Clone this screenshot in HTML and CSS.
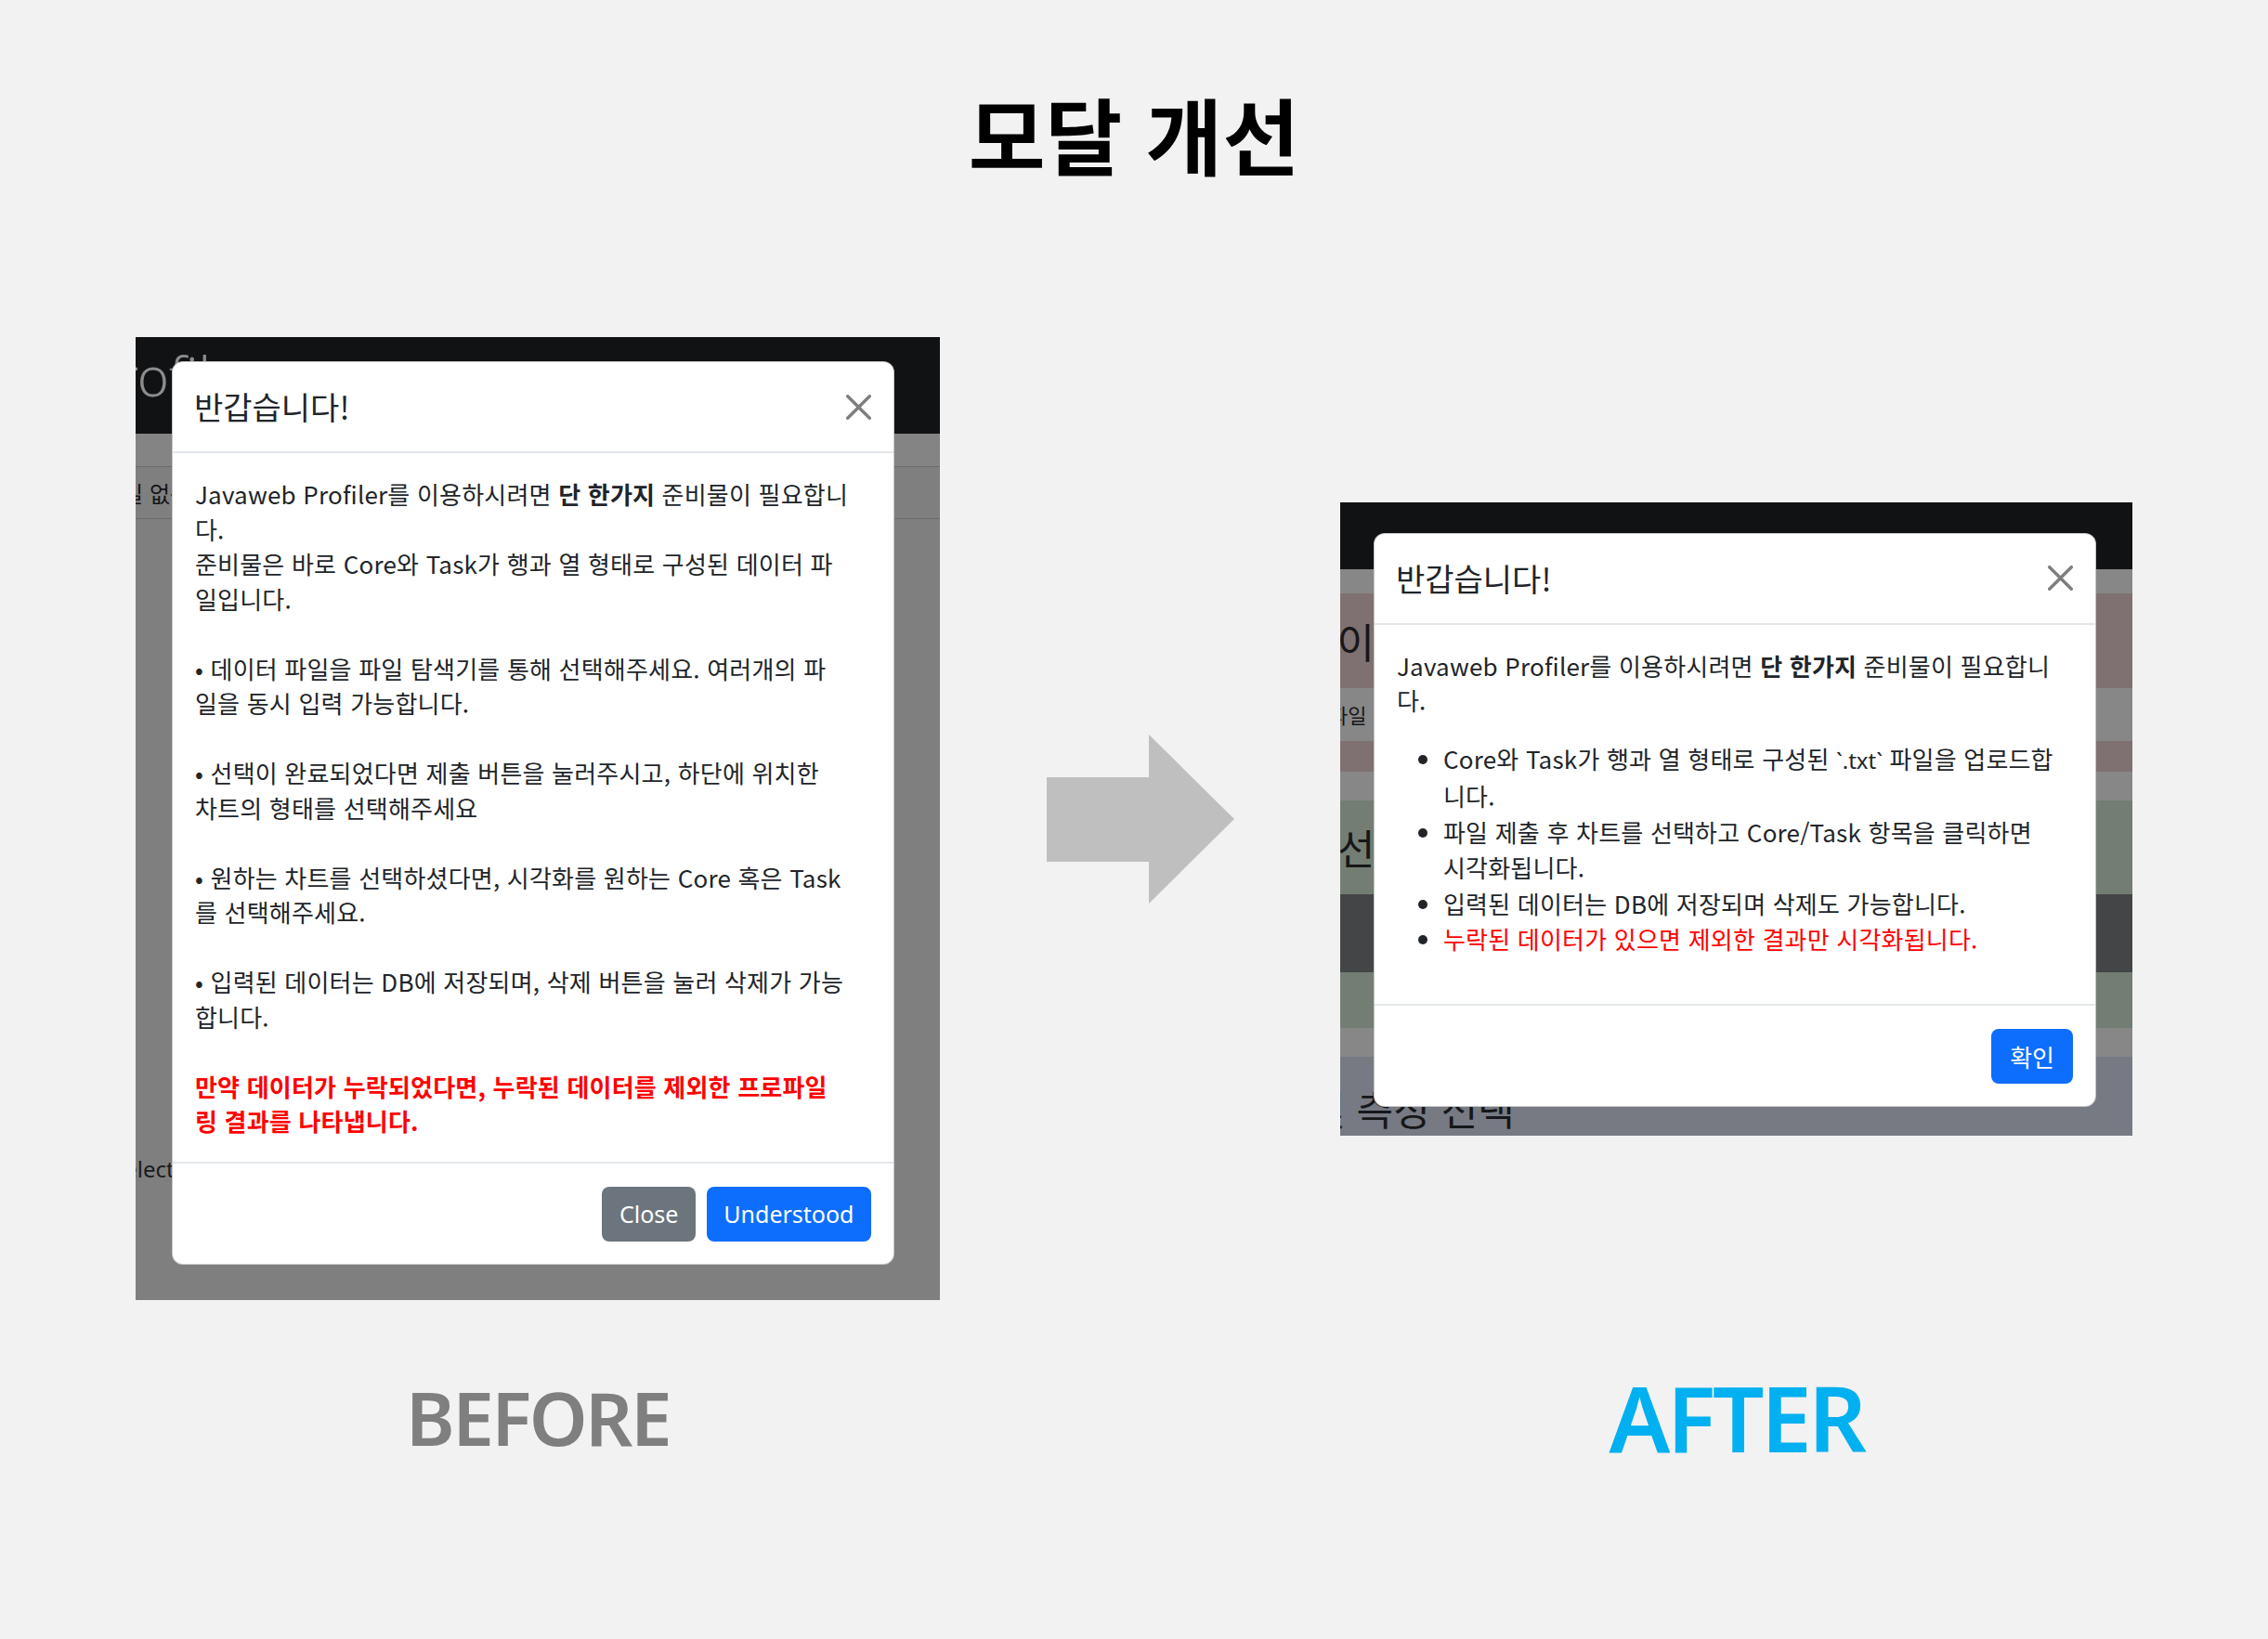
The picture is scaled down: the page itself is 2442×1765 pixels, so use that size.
FILE: index.html
```html
<!DOCTYPE html>
<html lang="ko">
<head>
<meta charset="utf-8">
<title>모달 개선</title>
<link rel="stylesheet" href="styles.css">
</head>
<body>
<main class="slide">
  <h1 class="slide-title">모달 개선</h1>
  <div class="compare">
    <section class="shot shot-before">
      <div class="bg-nav"><span class="bg-brand">Profiler</span></div>
      <div class="bg-band"></div>
      <div class="bg-row"><span class="bg-row-text">파일 없음</span></div>
      <div class="bg-select">Select</div>

      <div class="modal modal-before">
        <div class="modal-header">
          <h2 class="modal-title">반갑습니다!</h2>
          <svg class="btn-close" viewBox="0 0 16 16" aria-label="닫기"><path d="M.293.293a1 1 0 0 1 1.414 0L8 6.586 14.293.293a1 1 0 1 1 1.414 1.414L9.414 8l6.293 6.293a1 1 0 0 1-1.414 1.414L8 9.414l-6.293 6.293a1 1 0 0 1-1.414-1.414L6.586 8 .293 1.707a1 1 0 0 1 0-1.414z"/></svg>
        </div>
        <div class="modal-body body-before">
          Javaweb Profiler를 이용하시려면 <b>단 한가지</b> 준비물이 필요합니<br>다.<br>
          준비물은 바로 Core와 Task가 행과 열 형태로 구성된 데이터 파<br>일입니다.<br>
          <br>
          • 데이터 파일을 파일 탐색기를 통해 선택해주세요. 여러개의 파<br>일을 동시 입력 가능합니다.<br>
          <br>
          • 선택이 완료되었다면 제출 버튼을 눌러주시고, 하단에 위치한<br>차트의 형태를 선택해주세요<br>
          <br>
          • 원하는 차트를 선택하셨다면, 시각화를 원하는 Core 혹은 Task<br>를 선택해주세요.<br>
          <br>
          • 입력된 데이터는 DB에 저장되며, 삭제 버튼을 눌러 삭제가 가능<br>합니다.<br>
          <br>
          <b class="warn">만약 데이터가 누락되었다면, 누락된 데이터를 제외한 프로파일<br>링 결과를 나타냅니다.</b>
        </div>
        <div class="modal-footer">
          <button class="btn btn-secondary" type="button">Close</button>
          <button class="btn btn-primary" type="button">Understood</button>
        </div>
      </div>
    </section>

    <div class="arrow">
      <svg viewBox="0 0 202 182" width="202" height="182"><polygon points="0,46 110,46 110,0 202,91 110,182 110,137 0,137"/></svg>
    </div>

    <section class="shot shot-after">
      <div class="band b-dark"></div>
      <div class="band b-gray h26"></div>
      <div class="band b-pink h102"><span class="bg-big shift-44">데이</span></div>
      <div class="band b-gray h57"><span class="bg-small">파일</span></div>
      <div class="band b-pink h33"></div>
      <div class="band b-gray h31"></div>
      <div class="band b-green h101"><span class="bg-big shift-4">선택</span></div>
      <div class="band b-darkgray h84"></div>
      <div class="band b-green h60"></div>
      <div class="band b-gray h31"></div>
      <div class="band b-blue h85"><span class="bg-bottom">및 측정 선택</span></div>

      <div class="modal modal-after">
        <div class="modal-header">
          <h2 class="modal-title">반갑습니다!</h2>
          <svg class="btn-close" viewBox="0 0 16 16" aria-label="닫기"><path d="M.293.293a1 1 0 0 1 1.414 0L8 6.586 14.293.293a1 1 0 1 1 1.414 1.414L9.414 8l6.293 6.293a1 1 0 0 1-1.414 1.414L8 9.414l-6.293 6.293a1 1 0 0 1-1.414-1.414L6.586 8 .293 1.707a1 1 0 0 1 0-1.414z"/></svg>
        </div>
        <div class="modal-body body-after">
          <p class="intro">Javaweb Profiler를 이용하시려면 <b>단 한가지</b> 준비물이 필요합니<br>다.</p>
          <ul class="guide">
            <li>Core와 Task가 행과 열 형태로 구성된 <span class="tick">`.txt`</span> 파일을 업로드합<br>니다.</li>
            <li>파일 제출 후 차트를 선택하고 Core/Task 항목을 클릭하면<br>시각화됩니다.</li>
            <li>입력된 데이터는 DB에 저장되며 삭제도 가능합니다.</li>
            <li><span class="red">누락된 데이터가 있으면 제외한 결과만 시각화됩니다.</span></li>
          </ul>
        </div>
        <div class="modal-footer">
          <button class="btn btn-primary btn-ko" type="button">확인</button>
        </div>
      </div>
    </section>

    <div class="label label-before">BEFORE</div>
    <div class="label-spacer"></div>
    <div class="label label-after">AFTER</div>
  </div>
</main>
</body>
</html>
```

FILE: styles.css
```css
* { box-sizing: border-box; }

html, body {
  margin: 0;
  padding: 0;
}

body {
  width: 2442px;
  height: 1765px;
  overflow: hidden;
  background: #f2f2f2;
  font-family: "Noto Sans CJK KR", "Noto Sans", sans-serif;
  color: #212529;
}

.slide {
  padding-top: 90px;
}

.slide-title {
  margin: 0;
  text-align: center;
  font-family: "Noto Sans CJK KR", sans-serif;
  font-weight: 700;
  font-size: 90px;
  line-height: 106px;
  color: #000;
}

.compare {
  display: grid;
  grid-template-columns: 866px 431px 853px;
  align-items: center;
  margin-top: 167px;
  padding-left: 146px;
}

/* ---------- screenshots ---------- */
.shot {
  position: relative;
  overflow: hidden;
}

.shot-before {
  width: 866px;
  height: 1037px;
  background: #7f7f7f;
}

.shot-after {
  width: 853px;
  height: 682px;
  background: #878787;
}

.bg-nav {
  height: 104px;
  background: #111214;
  display: flex;
  align-items: center;
  padding-bottom: 22px;
}

.bg-brand {
  margin-left: -54px;
  font-family: "Noto Sans", sans-serif;
  font-weight: 300;
  font-size: 58px;
  color: #8c8c8c;
  white-space: nowrap;
}

.bg-band {
  height: 36px;
  background: #848484;
  border-bottom: 1px solid #6c6c6c;
}

.bg-row {
  height: 56px;
  border-bottom: 1px solid #6c6c6c;
  display: flex;
  align-items: center;
}

.bg-row-text {
  margin-left: -36px;
  font-size: 24px;
  color: #141516;
  white-space: nowrap;
}

.bg-select {
  margin-top: 682px;
  margin-left: -25px;
  font-family: "Noto Sans", sans-serif;
  font-size: 24px;
  line-height: 36px;
  color: #1a1b1c;
  white-space: nowrap;
}

.band {
  display: flex;
  align-items: center;
  overflow: hidden;
  white-space: nowrap;
  color: #161718;
}

.b-dark { height: 72px; background: #111214; }
.b-gray { background: #878787; }
.b-pink { background: #7f7171; }
.b-green { background: #737d73; }
.b-darkgray { background: #444546; }
.b-blue { background: #777a83; align-items: flex-end; }

.h26 { height: 26px; }
.h31 { height: 31px; }
.h33 { height: 33px; }
.h57 { height: 57px; }
.h60 { height: 60px; }
.h84 { height: 84px; }
.h85 { height: 85px; }
.h101 { height: 101px; }
.h102 { height: 102px; }

.bg-big {
  font-size: 44px;
  line-height: 1;
}

.shift-44 { margin-left: -44px; }
.shift-4 { margin-left: -3px; }

.bg-small {
  margin-left: -12px;
  font-size: 22px;
  line-height: 1;
}

.bg-bottom {
  margin-left: -34px;
  margin-bottom: 3px;
  font-size: 43px;
  line-height: 1.2;
}

/* ---------- modal ---------- */
.modal {
  position: absolute;
  width: 778px;
  background: #fff;
  border: 1px solid rgba(0, 0, 0, 0.22);
  border-radius: 12px;
  font-family: "Noto Sans CJK KR", sans-serif;
  color: #212529;
}

.modal-before { left: 39px; top: 26px; }
.modal-after { left: 36px; top: 33px; }

.modal-header {
  height: 98px;
  padding: 0 24px 0 23px;
  border-bottom: 2px solid #e3e6ea;
  display: flex;
  align-items: center;
  justify-content: space-between;
}

.modal-title {
  margin: 0;
  font-size: 34px;
  font-weight: 400;
  line-height: 46px;
}

.btn-close {
  width: 27px;
  height: 27px;
  fill: #000;
  opacity: 0.5;
}

.modal-body {
  padding: 25px 24px;
  font-size: 26px;
  letter-spacing: 0.2px;
  white-space: nowrap;
}

.body-before {
  line-height: 37.5px;
}

.warn {
  color: #ff0000;
  font-weight: 700;
}

.intro {
  margin: 0 0 25px;
  line-height: 37.5px;
}

.guide {
  margin: 0 0 25px;
  padding-left: 50px;
  line-height: 38.6px;
}

.tick {
  font-family: "Noto Sans", sans-serif;
  letter-spacing: 0;
  font-size: 24px;
}

.red { color: #ff0000; }

.modal-footer {
  padding: 25px 24px 24px;
  border-top: 2px solid #e3e6ea;
  display: flex;
  justify-content: flex-end;
  gap: 12px;
}

.btn {
  height: 59px;
  padding: 0 18.5px;
  border: 0;
  border-radius: 8px;
  font-family: "Noto Sans", "Noto Sans CJK KR", sans-serif;
  font-size: 25px;
  color: #fff;
  display: flex;
  align-items: center;
}

.btn-ko {
  padding: 0 20px;
  font-size: 26px;
}

.btn-secondary { background: #6c757d; }
.btn-primary { background: #0d6efd; }

/* ---------- arrow ---------- */
.arrow {
  display: flex;
  justify-content: center;
}

.arrow svg {
  display: block;
  fill: #bfbfbf;
}

/* ---------- labels ---------- */
.label {
  justify-self: center;
  margin-top: 77px;
  font-family: "Noto Sans", sans-serif;
  font-weight: 600;
  line-height: 1;
}

.label-before {
  font-size: 80px;
  letter-spacing: -2.6px;
  color: #7f7f7f;
}

.label-after {
  font-size: 98px;
  letter-spacing: -3.6px;
  color: #00b0f0;
}
```
